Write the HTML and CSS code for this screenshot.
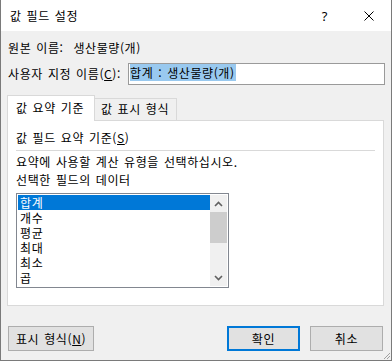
FILE: index.html
```html
<!DOCTYPE html>
<html lang="ko">
<head>
  <meta charset="UTF-8" />
  <title>값 필드 설정</title>
  <link rel="stylesheet" href="styles.css">
</head>
<body>
  <div class="window">
    <div class="titlebar">
      <span class="title">값 필드 설정</span>
      <span class="help">?</span>
      <svg class="close" width="10" height="10" viewBox="0 0 10 10">
        <path d="M0.5 0.5 L9.5 9.5 M9.5 0.5 L0.5 9.5" stroke="#000" stroke-width="1" fill="none"/>
      </svg>
    </div>

    <div class="content">
      <div class="row source">원본 이름:&nbsp;&nbsp;생산물량(개)</div>

      <div class="row custom">
        <label>사용자 지정 이름(<u>C</u>):</label>
        <div class="name-input"><span class="sel">합계 : 생산물량(개)</span></div>
      </div>

      <div class="tabs">
        <div class="tab active">값 요약 기준</div>
        <div class="tab">값 표시 형식</div>
      </div>

      <div class="panel">
        <div class="group-title">값 필드 요약 기준(<u>S</u>)</div>
        <div class="sep"></div>
        <div class="hint">요약에 사용할 계산 유형을 선택하십시오.</div>
        <div class="hint second">선택한 필드의 데이터</div>

        <div class="listbox">
          <ul class="items">
            <li class="selected">합계</li>
            <li>개수</li>
            <li>평균</li>
            <li>최대</li>
            <li>최소</li>
            <li>곱</li>
          </ul>
          <div class="scrollbar">
            <div class="arrow">
              <svg width="9" height="6" viewBox="0 0 9 6"><path d="M1 5 L4.5 1.5 L8 5" stroke="#606060" stroke-width="1.6" fill="none"/></svg>
            </div>
            <div class="thumb"></div>
            <div class="track"></div>
            <div class="arrow">
              <svg width="9" height="6" viewBox="0 0 9 6"><path d="M1 1 L4.5 4.5 L8 1" stroke="#606060" stroke-width="1.6" fill="none"/></svg>
            </div>
          </div>
        </div>
      </div>

      <div class="buttons">
        <button class="btn format">표시 형식(<u>N</u>)</button>
        <button class="btn default">확인</button>
        <button class="btn cancel">취소</button>
      </div>
    </div>

    <svg class="grip" width="8" height="8" viewBox="0 0 8 8">
      <path d="M7 1 L1 7 M7 4 L4 7" stroke="#a0a0a0" stroke-width="1" fill="none"/>
    </svg>
  </div>
</body>
</html>
```

FILE: styles.css
```css
:root {
  --face: #f0f0f0;
  --line: #d9d9d9;
  --frame: #7a7a7a;
  --accent: #0078d7;
  --font: "Noto Sans CJK KR", "Noto Sans", sans-serif;
}

html, body {
  margin: 0;
  padding: 0;
  background: var(--face);
  font-family: var(--font);
  font-size: 12px;
  letter-spacing: 0.6px;
  word-spacing: 1px;
  color: #000;
}

.window {
  position: relative;
  width: 392px;
  height: 361px;
  box-sizing: border-box;
  border: 1px solid var(--frame);
  border-top: none;
  background: var(--face);
  display: flex;
  flex-direction: column;
}

.titlebar {
  height: 31px;
  flex: 0 0 31px;
  background: #fff;
  display: flex;
  align-items: center;
  padding: 0 17px 0 9px;
}

.title {
  line-height: 16px;
}

.help {
  margin-left: auto;
  font-family: "Noto Sans", sans-serif;
  font-size: 13px;
  line-height: 16px;
  margin-right: 36px;
}

.close {
  display: block;
}

.content {
  flex: 1;
  padding: 0 7px 0 6px;
  display: flex;
  flex-direction: column;
}

.row {
  line-height: 16px;
  padding-left: 1px;
}

.source {
  margin-top: 9px;
}

.custom {
  margin-top: 7px;
  display: flex;
  align-items: center;
  margin-right: -1px;
}

.name-input {
  margin-left: auto;
  width: 257px;
  height: 22px;
  box-sizing: border-box;
  border: 1px solid #9a9a9a;
  background: #fff;
  padding-left: 1px;
}

.sel {
  display: inline-block;
  vertical-align: top;
  line-height: 17px;
  background: #99c9ef;
  padding-right: 1px;
}

.tabs {
  margin-top: 10px;
  height: 25px;
  display: flex;
  align-items: flex-end;
}

.tab {
  box-sizing: border-box;
  border: 1px solid var(--line);
  border-bottom: none;
  line-height: 16px;
}

.tab.active {
  position: relative;
  z-index: 1;
  width: 88px;
  height: 26px;
  margin-bottom: -1px;
  background: #fff;
  padding: 4px 0 0 8px;
}

.tab:not(.active) {
  width: 83px;
  height: 22px;
  margin-left: -1px;
  padding: 2px 0 0 6px;
}

.panel {
  height: 186px;
  box-sizing: border-box;
  border: 1px solid var(--line);
  background: #fff;
  padding: 9px 8px 0 8px;
}

.group-title,
.hint {
  line-height: 16px;
}

.sep {
  height: 1px;
  background: var(--line);
  margin-top: 4px;
}

.hint {
  margin-top: 3px;
}

.hint.second {
  margin-top: 2px;
}

.listbox {
  margin-top: 5px;
  width: 213px;
  height: 95px;
  box-sizing: border-box;
  border: 1px solid #828790;
  padding: 1px;
  display: flex;
}

.items {
  list-style: none;
  margin: 0;
  padding: 0;
  width: 192px;
}

.items li {
  height: 15px;
  line-height: 15px;
  padding-left: 2px;
}

.items li.selected {
  background: var(--accent);
  color: #fff;
}

.scrollbar {
  width: 17px;
  background: var(--face);
  display: flex;
  flex-direction: column;
}

.arrow {
  height: 17px;
  display: flex;
  align-items: center;
  justify-content: center;
}

.thumb {
  height: 31px;
  background: #cdcdcd;
}

.track {
  flex: 1;
}

.buttons {
  margin-top: 20px;
  display: flex;
}

.btn {
  height: 25px;
  box-sizing: border-box;
  border: 1px solid #adadad;
  background: #e1e1e1;
  font-family: var(--font);
  font-size: 12px;
  letter-spacing: 0.6px;
  word-spacing: 1px;
  color: #000;
  padding: 0;
  line-height: 16px;
}

.format {
  width: 86px;
  margin-left: 1px;
}

.default {
  width: 73px;
  margin-left: auto;
  border: 2px solid var(--accent);
}

.cancel {
  width: 73px;
  margin-left: 10px;
  margin-right: 1px;
}

.grip {
  position: absolute;
  right: 0;
  bottom: 0;
}
```
